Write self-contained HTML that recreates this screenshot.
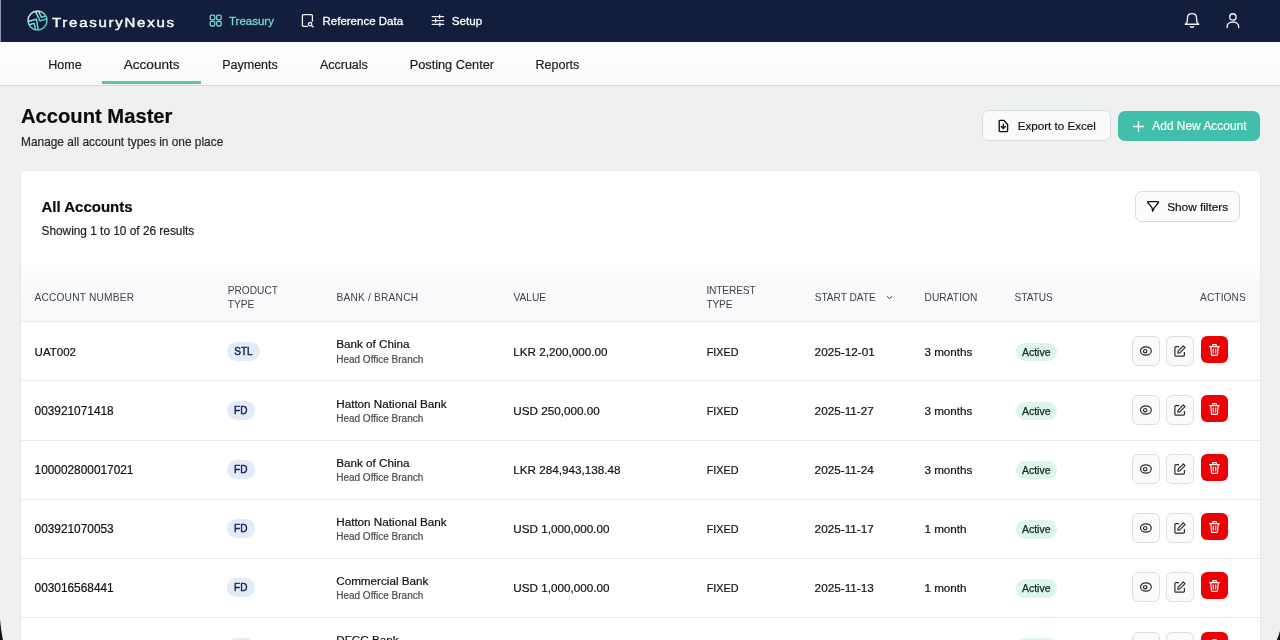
<!DOCTYPE html>
<html><head><meta charset="utf-8">
<style>
*{box-sizing:border-box;margin:0;padding:0}
html,body{width:1280px;height:640px;overflow:hidden}
body{-webkit-font-smoothing:antialiased;font-family:"Liberation Sans",sans-serif;background:#eff1f1;color:#111;position:relative}
#root{will-change:transform;position:absolute;left:0;top:0;width:1280px;height:640px;overflow:hidden}
.t{position:absolute;white-space:nowrap;line-height:normal;-webkit-text-stroke:0.2px currentColor}
.hdr{position:absolute;left:0;top:0;width:1280px;height:42px;background:#131e3c}
.hdr .strip{position:absolute;left:0;top:0;width:1px;height:42px;background:#8c93a6}
.brand{letter-spacing:1.45px;transform:scaleX(1.2);transform-origin:0 0;-webkit-text-stroke:0.45px #f4f6fa}
.tabs{position:absolute;left:0;top:42px;width:1280px;height:44px;background:linear-gradient(#fefefe,#fafafa);border-bottom:1px solid #d9d9da}
.ul{position:absolute;left:102px;top:81px;width:99px;height:3px;background:#52c9a6}
.btn{position:absolute;border-radius:7px}
.exp{left:982px;top:110px;width:129px;height:31px;background:#fafafa;border:1px solid #d9dcde}
.add{left:1118px;top:111px;width:142px;height:30px;background:#41bfab}
.flt{left:1135px;top:191px;width:105px;height:31px;background:#fcfcfc;border:1px solid #d9dcde}
.card{position:absolute;left:20px;top:170px;width:1241px;height:520px;background:#fff;border:1px solid #e5e7e7;border-radius:5px}
.thead{position:absolute;left:21px;top:262px;width:1239px;height:59px;background:linear-gradient(#fefefe 0%,#f9fafb 35%,#f8f9fa 100%)}
.sep{position:absolute;left:21px;width:1239px;height:1px;background:#e9eaeb}
.pill{position:absolute;height:19px;border-radius:10px;background:#e3ebf6;color:#15205e;font-size:10px;line-height:19px;text-align:center;-webkit-text-stroke:0.45px #15205e}
.act{position:absolute;width:41px;height:18.5px;border-radius:9.5px;background:#ddf5ea;color:#0f2a1c;font-size:10.5px;line-height:18.5px;text-align:center;-webkit-text-stroke:0.25px #0f2a1c}
.ab{position:absolute;width:28px;height:30px;border-radius:6px;display:flex;align-items:center;justify-content:center}
.eye{left:1132px;background:#fafafa;border:1px solid #dcdfe2}
.ed{left:1166px;background:#fafafa;border:1px solid #dcdfe2}
.del{left:1200.5px;width:27.5px;height:27px;background:#ea0204}

</style></head><body>
<div id="root">
<div class="hdr"><div class="strip"></div></div>
<svg style="position:absolute;left:25px;top:8px" width="25" height="25" viewBox="0 0 25 25">
<defs><linearGradient id="lg" x1="0" y1="0" x2="1" y2="1"><stop offset="0" stop-color="#eaf6f8"/><stop offset="0.4" stop-color="#7adbd3"/><stop offset="1" stop-color="#4fcfc3"/></linearGradient></defs>
<g fill="none" stroke="url(#lg)" stroke-width="1.45" stroke-linejoin="round">
<circle cx="12.5" cy="12.5" r="9.5"/>
<path d="M10.4 3.2L15 12.9L21.6 11.1"/>
<path d="M13.3 2.9L16.4 9.2L21 8"/>
<path d="M3.4 13.4L11.5 11.3L13.2 21.9"/>
<path d="M4.3 16.6L9.2 15.4L10.5 21.4"/>
</g></svg>

<div class="t brand" style="left:52.25px;top:15.9px;font-size:12.5px;color:#f4f6fa;">TreasuryNexus</div>
<svg style="position:absolute;left:209px;top:14px" width="14" height="14" viewBox="0 0 14 14"><g fill="none" stroke="#6fd8cf" stroke-width="1.3"><rect x="1.2" y="1.2" width="4.6" height="4.6" rx="1.4"/><rect x="7.6" y="1.2" width="4.6" height="4.6" rx="1.4"/><rect x="1.2" y="7.4" width="4.6" height="4.6" rx="1.4"/><rect x="7.6" y="7.4" width="4.6" height="4.6" rx="1.4"/></g></svg>
<svg style="position:absolute;left:301px;top:14px" width="14" height="14" viewBox="0 0 14 14"><g fill="none" stroke="#f0f2f6" stroke-width="1.3" stroke-linecap="round"><path d="M6.4 12.3H2.6A1.2 1.2 0 0 1 1.4 11.1V1.9A1.2 1.2 0 0 1 2.6 0.7H10.2A1.2 1.2 0 0 1 11.4 1.9V7.2"/><circle cx="9.1" cy="10.2" r="1.7"/><path d="M10.4 11.5L12.3 12.9"/></g></svg>
<svg style="position:absolute;left:431px;top:14px" width="14" height="14" viewBox="0 0 14 14"><g fill="none" stroke="#f0f2f6" stroke-width="1.25" stroke-linecap="round"><path d="M1.2 2.6H12.6M1.2 6.5H12.6M1.2 10.4H12.6"/><path d="M8.6 1V4.2M4.6 4.9V8.1M8.8 8.8V12"/></g></svg>
<svg style="position:absolute;left:1183px;top:12px" width="18" height="18" viewBox="0 0 18 18"><g fill="none" stroke="#f0f2f6" stroke-width="1.35" stroke-linejoin="round" stroke-linecap="round"><path d="M2.3 12.2C3.6 11.3 4.4 10.2 4.4 8.3V6.2C4.4 3.4 6.4 1.6 9 1.6S13.6 3.4 13.6 6.2V8.3C13.6 10.2 14.4 11.3 15.7 12.2Z"/><path d="M7.4 14.6C8 15.5 10 15.5 10.6 14.6"/></g></svg>
<svg style="position:absolute;left:1225px;top:12px" width="16" height="17" viewBox="0 0 16 17"><g fill="none" stroke="#f0f2f6" stroke-width="1.4" stroke-linecap="round"><circle cx="7.9" cy="4.9" r="3.2"/><path d="M2.1 15.6V14.8C2.1 12 4.6 10 7.9 10S13.7 12 13.7 14.8V15.6"/></g></svg>

<div class="t " style="left:229px;top:14.8px;font-size:11.5px;color:#6fd8cf;-webkit-text-stroke:0.3px #6fd8cf;">Treasury</div>
<div class="t " style="left:322.5px;top:14.8px;font-size:11.5px;color:#fafbfd;-webkit-text-stroke:0.3px #fafbfd;">Reference Data</div>
<div class="t " style="left:451.8px;top:13.8px;font-size:11.7px;color:#fafbfd;-webkit-text-stroke:0.3px #fafbfd;">Setup</div>
<div class="tabs"></div><div class="ul"></div>
<div class="t " style="left:48.3px;top:57.6px;font-size:12.5px;color:#1d1d1f;">Home</div>
<div class="t " style="left:123.7px;top:56.6px;font-size:13.6px;color:#1d1d1f;">Accounts</div>
<div class="t " style="left:222.2px;top:57.6px;font-size:12.5px;color:#1d1d1f;">Payments</div>
<div class="t " style="left:319.9px;top:57.6px;font-size:12.5px;color:#1d1d1f;">Accruals</div>
<div class="t " style="left:409.7px;top:56.6px;font-size:12.75px;color:#1d1d1f;">Posting Center</div>
<div class="t " style="left:535.5px;top:57.6px;font-size:12.5px;color:#1d1d1f;">Reports</div>
<div class="t " style="left:21px;top:104.7px;font-size:20.2px;font-weight:bold;color:#0b0c10;">Account Master</div>
<div class="t " style="left:21px;top:135px;font-size:11.9px;color:#26282c;">Manage all account types in one place</div>
<div class="btn exp"></div><div class="btn add"></div>
<div class="t " style="left:1017.8px;top:119px;font-size:11.6px;color:#111;">Export to Excel</div>
<div class="t " style="left:1152.3px;top:118.75px;font-size:11.95px;color:#f5fffc;">Add New Account</div>
<svg style="position:absolute;left:997px;top:119px" width="13" height="14" viewBox="0 0 13 14"><g fill="none" stroke="#111" stroke-width="1.35" stroke-linejoin="round" stroke-linecap="round"><path d="M3.1 1.3H6.6L10.6 5.5V11.7A0.9 0.9 0 0 1 9.7 12.6H3.1A0.9 0.9 0 0 1 2.2 11.7V2.2A0.9 0.9 0 0 1 3.1 1.3Z"/><path d="M6.3 5.2V9.4M4.3 7.6L6.3 9.6L8.3 7.6"/></g></svg>
<svg style="position:absolute;left:1132px;top:120px" width="13" height="13" viewBox="0 0 13 13"><path d="M6.5 1V12M1 6.5H12" fill="none" stroke="#f3fffb" stroke-width="1.3"/></svg>

<div class="card"></div><div class="thead"></div>
<div class="t " style="left:41.5px;top:197.8px;font-size:15px;font-weight:bold;color:#0b0c10;">All Accounts</div>
<div class="t " style="left:41.5px;top:223.7px;font-size:11.85px;color:#1d1f22;">Showing 1 to 10 of 26 results</div>
<div class="btn flt"></div>
<div class="t " style="left:1167.2px;top:199.6px;font-size:11.8px;color:#111;">Show filters</div>
<svg style="position:absolute;left:1146px;top:199px" width="15" height="14" viewBox="0 0 15 14"><path d="M2.3 2.6H11.9Q13 2.6 12.4 3.5L8.1 9.1L6.6 12.2L6 8.6L1.8 3.5Q1.2 2.6 2.3 2.6Z" fill="none" stroke="#111" stroke-width="1.3" stroke-linejoin="round"/></svg>

<div class="t " style="left:34.4px;top:291.6px;font-size:10.2px;color:#404349;letter-spacing:0.19px;-webkit-text-stroke:0;">ACCOUNT NUMBER</div>
<div class="t " style="left:227.7px;top:284.75px;font-size:10.2px;color:#404349;letter-spacing:0px;-webkit-text-stroke:0;">PRODUCT</div>
<div class="t " style="left:227.7px;top:298.8px;font-size:10.2px;color:#404349;letter-spacing:0px;-webkit-text-stroke:0;">TYPE</div>
<div class="t " style="left:336.5px;top:292px;font-size:10.2px;color:#404349;letter-spacing:0.19px;-webkit-text-stroke:0;">BANK / BRANCH</div>
<div class="t " style="left:513.6px;top:291.8px;font-size:10.2px;color:#404349;letter-spacing:-0.05px;-webkit-text-stroke:0;">VALUE</div>
<div class="t " style="left:706.4px;top:284.75px;font-size:10.2px;color:#404349;letter-spacing:-0.15px;-webkit-text-stroke:0;">INTEREST</div>
<div class="t " style="left:706.4px;top:298.8px;font-size:10.2px;color:#404349;letter-spacing:-0.15px;-webkit-text-stroke:0;">TYPE</div>
<div class="t " style="left:814.7px;top:291.8px;font-size:10.2px;color:#404349;letter-spacing:-0.04px;-webkit-text-stroke:0;">START DATE</div>
<div class="t " style="left:924.5px;top:291.8px;font-size:10.2px;color:#404349;letter-spacing:0.06px;-webkit-text-stroke:0;">DURATION</div>
<div class="t " style="left:1014.6px;top:291.8px;font-size:10.2px;color:#404349;letter-spacing:-0.08px;-webkit-text-stroke:0;">STATUS</div>
<div class="t " style="left:1200px;top:291.7px;font-size:10.2px;color:#404349;letter-spacing:0.09px;-webkit-text-stroke:0;">ACTIONS</div>
<svg style="position:absolute;left:885px;top:295px" width="9" height="6" viewBox="0 0 9 6"><path d="M2 1.3L4.5 3.6L7 1.3" fill="none" stroke="#3a3d42" stroke-width="1"/></svg>
<div class="sep" style="top:321px"></div>
<div class="t " style="left:34.6px;top:345.7px;font-size:11.5px;color:#111;">UAT002</div>
<div class="pill" style="left:227px;top:342.0px;width:33px">STL</div>
<div class="t " style="left:336.2px;top:337.4px;font-size:11.7px;color:#111;">Bank of China</div>
<div class="t " style="left:336.2px;top:354.0px;font-size:10px;color:#4a4d52;">Head Office Branch</div>
<div class="t " style="left:513.3px;top:344.8px;font-size:11.7px;color:#111;">LKR 2,200,000.00</div>
<div class="t " style="left:706.7px;top:345.8px;font-size:10.8px;color:#111;">FIXED</div>
<div class="t " style="left:814.6px;top:344.6px;font-size:11.75px;color:#111;">2025-12-01</div>
<div class="t " style="left:924.4px;top:344.6px;font-size:11.7px;color:#111;">3 months</div>
<div class="act" style="left:1015.7px;top:342.7px">Active</div>
<div class="ab eye" style="top:336.0px"><svg width="14" height="12" viewBox="0 0 14 12"><ellipse cx="6.9" cy="6" rx="5.4" ry="4.1" fill="none" stroke="#2b2d31" stroke-width="1.2"/><circle cx="6.2" cy="6.2" r="1.7" fill="none" stroke="#2b2d31" stroke-width="1.2"/></svg></div>
<div class="ab ed" style="top:336.0px"><svg width="12" height="12" viewBox="0 0 12 12"><path d="M5 1.6H1.8A0.9 0.9 0 0 0 0.9 2.5V10.2A0.9 0.9 0 0 0 1.8 11.1H9.5A0.9 0.9 0 0 0 10.4 10.2V7" fill="none" stroke="#2b2d31" stroke-width="1.2"/><path d="M9.3 0.9L11 2.6L5.8 7.8L3.8 8.2L4.2 6.2Z" fill="none" stroke="#2b2d31" stroke-width="1.2" stroke-linejoin="round"/></svg></div>
<div class="ab del" style="top:336.0px"><svg width="11" height="12" viewBox="0 0 11 12"><path d="M0.6 2.6H10.4M3.6 2.4V1.1A0.5 0.5 0 0 1 4.1 0.6H6.9A0.5 0.5 0 0 1 7.4 1.1V2.4M1.8 2.8L2.5 10.6A0.9 0.9 0 0 0 3.4 11.4H7.6A0.9 0.9 0 0 0 8.5 10.6L9.2 2.8M4.3 5V9M6.7 5V9" fill="none" stroke="#fff" stroke-width="1.15" stroke-linejoin="round" stroke-linecap="round"/></svg></div>
<div class="sep" style="top:380px"></div>
<div class="t " style="left:34.6px;top:403.8px;font-size:11.85px;color:#111;">003921071418</div>
<div class="pill" style="left:227px;top:401.1px;width:27.5px">FD</div>
<div class="t " style="left:336.2px;top:396.5px;font-size:11.7px;color:#111;">Hatton National Bank</div>
<div class="t " style="left:336.2px;top:413.1px;font-size:10px;color:#4a4d52;">Head Office Branch</div>
<div class="t " style="left:513.3px;top:403.9px;font-size:11.7px;color:#111;">USD 250,000.00</div>
<div class="t " style="left:706.7px;top:404.9px;font-size:10.8px;color:#111;">FIXED</div>
<div class="t " style="left:814.6px;top:403.7px;font-size:11.75px;color:#111;">2025-11-27</div>
<div class="t " style="left:924.4px;top:403.7px;font-size:11.7px;color:#111;">3 months</div>
<div class="act" style="left:1015.7px;top:401.8px">Active</div>
<div class="ab eye" style="top:395.1px"><svg width="14" height="12" viewBox="0 0 14 12"><ellipse cx="6.9" cy="6" rx="5.4" ry="4.1" fill="none" stroke="#2b2d31" stroke-width="1.2"/><circle cx="6.2" cy="6.2" r="1.7" fill="none" stroke="#2b2d31" stroke-width="1.2"/></svg></div>
<div class="ab ed" style="top:395.1px"><svg width="12" height="12" viewBox="0 0 12 12"><path d="M5 1.6H1.8A0.9 0.9 0 0 0 0.9 2.5V10.2A0.9 0.9 0 0 0 1.8 11.1H9.5A0.9 0.9 0 0 0 10.4 10.2V7" fill="none" stroke="#2b2d31" stroke-width="1.2"/><path d="M9.3 0.9L11 2.6L5.8 7.8L3.8 8.2L4.2 6.2Z" fill="none" stroke="#2b2d31" stroke-width="1.2" stroke-linejoin="round"/></svg></div>
<div class="ab del" style="top:395.1px"><svg width="11" height="12" viewBox="0 0 11 12"><path d="M0.6 2.6H10.4M3.6 2.4V1.1A0.5 0.5 0 0 1 4.1 0.6H6.9A0.5 0.5 0 0 1 7.4 1.1V2.4M1.8 2.8L2.5 10.6A0.9 0.9 0 0 0 3.4 11.4H7.6A0.9 0.9 0 0 0 8.5 10.6L9.2 2.8M4.3 5V9M6.7 5V9" fill="none" stroke="#fff" stroke-width="1.15" stroke-linejoin="round" stroke-linecap="round"/></svg></div>
<div class="sep" style="top:440px"></div>
<div class="t " style="left:34.6px;top:462.9px;font-size:11.85px;color:#111;">100002800017021</div>
<div class="pill" style="left:227px;top:460.2px;width:27.5px">FD</div>
<div class="t " style="left:336.2px;top:455.6px;font-size:11.7px;color:#111;">Bank of China</div>
<div class="t " style="left:336.2px;top:472.2px;font-size:10px;color:#4a4d52;">Head Office Branch</div>
<div class="t " style="left:513.3px;top:463.0px;font-size:11.7px;color:#111;">LKR 284,943,138.48</div>
<div class="t " style="left:706.7px;top:464.0px;font-size:10.8px;color:#111;">FIXED</div>
<div class="t " style="left:814.6px;top:462.8px;font-size:11.75px;color:#111;">2025-11-24</div>
<div class="t " style="left:924.4px;top:462.8px;font-size:11.7px;color:#111;">3 months</div>
<div class="act" style="left:1015.7px;top:460.9px">Active</div>
<div class="ab eye" style="top:454.2px"><svg width="14" height="12" viewBox="0 0 14 12"><ellipse cx="6.9" cy="6" rx="5.4" ry="4.1" fill="none" stroke="#2b2d31" stroke-width="1.2"/><circle cx="6.2" cy="6.2" r="1.7" fill="none" stroke="#2b2d31" stroke-width="1.2"/></svg></div>
<div class="ab ed" style="top:454.2px"><svg width="12" height="12" viewBox="0 0 12 12"><path d="M5 1.6H1.8A0.9 0.9 0 0 0 0.9 2.5V10.2A0.9 0.9 0 0 0 1.8 11.1H9.5A0.9 0.9 0 0 0 10.4 10.2V7" fill="none" stroke="#2b2d31" stroke-width="1.2"/><path d="M9.3 0.9L11 2.6L5.8 7.8L3.8 8.2L4.2 6.2Z" fill="none" stroke="#2b2d31" stroke-width="1.2" stroke-linejoin="round"/></svg></div>
<div class="ab del" style="top:454.2px"><svg width="11" height="12" viewBox="0 0 11 12"><path d="M0.6 2.6H10.4M3.6 2.4V1.1A0.5 0.5 0 0 1 4.1 0.6H6.9A0.5 0.5 0 0 1 7.4 1.1V2.4M1.8 2.8L2.5 10.6A0.9 0.9 0 0 0 3.4 11.4H7.6A0.9 0.9 0 0 0 8.5 10.6L9.2 2.8M4.3 5V9M6.7 5V9" fill="none" stroke="#fff" stroke-width="1.15" stroke-linejoin="round" stroke-linecap="round"/></svg></div>
<div class="sep" style="top:499px"></div>
<div class="t " style="left:34.6px;top:522.0px;font-size:11.85px;color:#111;">003921070053</div>
<div class="pill" style="left:227px;top:519.3px;width:27.5px">FD</div>
<div class="t " style="left:336.2px;top:514.7px;font-size:11.7px;color:#111;">Hatton National Bank</div>
<div class="t " style="left:336.2px;top:531.3px;font-size:10px;color:#4a4d52;">Head Office Branch</div>
<div class="t " style="left:513.3px;top:522.1px;font-size:11.7px;color:#111;">USD 1,000,000.00</div>
<div class="t " style="left:706.7px;top:523.1px;font-size:10.8px;color:#111;">FIXED</div>
<div class="t " style="left:814.6px;top:521.9px;font-size:11.75px;color:#111;">2025-11-17</div>
<div class="t " style="left:924.4px;top:521.9px;font-size:11.7px;color:#111;">1 month</div>
<div class="act" style="left:1015.7px;top:520.0px">Active</div>
<div class="ab eye" style="top:513.3px"><svg width="14" height="12" viewBox="0 0 14 12"><ellipse cx="6.9" cy="6" rx="5.4" ry="4.1" fill="none" stroke="#2b2d31" stroke-width="1.2"/><circle cx="6.2" cy="6.2" r="1.7" fill="none" stroke="#2b2d31" stroke-width="1.2"/></svg></div>
<div class="ab ed" style="top:513.3px"><svg width="12" height="12" viewBox="0 0 12 12"><path d="M5 1.6H1.8A0.9 0.9 0 0 0 0.9 2.5V10.2A0.9 0.9 0 0 0 1.8 11.1H9.5A0.9 0.9 0 0 0 10.4 10.2V7" fill="none" stroke="#2b2d31" stroke-width="1.2"/><path d="M9.3 0.9L11 2.6L5.8 7.8L3.8 8.2L4.2 6.2Z" fill="none" stroke="#2b2d31" stroke-width="1.2" stroke-linejoin="round"/></svg></div>
<div class="ab del" style="top:513.3px"><svg width="11" height="12" viewBox="0 0 11 12"><path d="M0.6 2.6H10.4M3.6 2.4V1.1A0.5 0.5 0 0 1 4.1 0.6H6.9A0.5 0.5 0 0 1 7.4 1.1V2.4M1.8 2.8L2.5 10.6A0.9 0.9 0 0 0 3.4 11.4H7.6A0.9 0.9 0 0 0 8.5 10.6L9.2 2.8M4.3 5V9M6.7 5V9" fill="none" stroke="#fff" stroke-width="1.15" stroke-linejoin="round" stroke-linecap="round"/></svg></div>
<div class="sep" style="top:558px"></div>
<div class="t " style="left:34.6px;top:581.1px;font-size:11.85px;color:#111;">003016568441</div>
<div class="pill" style="left:227px;top:578.4px;width:27.5px">FD</div>
<div class="t " style="left:336.2px;top:573.8px;font-size:11.7px;color:#111;">Commercial Bank</div>
<div class="t " style="left:336.2px;top:590.4px;font-size:10px;color:#4a4d52;">Head Office Branch</div>
<div class="t " style="left:513.3px;top:581.2px;font-size:11.7px;color:#111;">USD 1,000,000.00</div>
<div class="t " style="left:706.7px;top:582.2px;font-size:10.8px;color:#111;">FIXED</div>
<div class="t " style="left:814.6px;top:581.0px;font-size:11.75px;color:#111;">2025-11-13</div>
<div class="t " style="left:924.4px;top:581.0px;font-size:11.7px;color:#111;">1 month</div>
<div class="act" style="left:1015.7px;top:579.1px">Active</div>
<div class="ab eye" style="top:572.4px"><svg width="14" height="12" viewBox="0 0 14 12"><ellipse cx="6.9" cy="6" rx="5.4" ry="4.1" fill="none" stroke="#2b2d31" stroke-width="1.2"/><circle cx="6.2" cy="6.2" r="1.7" fill="none" stroke="#2b2d31" stroke-width="1.2"/></svg></div>
<div class="ab ed" style="top:572.4px"><svg width="12" height="12" viewBox="0 0 12 12"><path d="M5 1.6H1.8A0.9 0.9 0 0 0 0.9 2.5V10.2A0.9 0.9 0 0 0 1.8 11.1H9.5A0.9 0.9 0 0 0 10.4 10.2V7" fill="none" stroke="#2b2d31" stroke-width="1.2"/><path d="M9.3 0.9L11 2.6L5.8 7.8L3.8 8.2L4.2 6.2Z" fill="none" stroke="#2b2d31" stroke-width="1.2" stroke-linejoin="round"/></svg></div>
<div class="ab del" style="top:572.4px"><svg width="11" height="12" viewBox="0 0 11 12"><path d="M0.6 2.6H10.4M3.6 2.4V1.1A0.5 0.5 0 0 1 4.1 0.6H6.9A0.5 0.5 0 0 1 7.4 1.1V2.4M1.8 2.8L2.5 10.6A0.9 0.9 0 0 0 3.4 11.4H7.6A0.9 0.9 0 0 0 8.5 10.6L9.2 2.8M4.3 5V9M6.7 5V9" fill="none" stroke="#fff" stroke-width="1.15" stroke-linejoin="round" stroke-linecap="round"/></svg></div>
<div class="sep" style="top:617px"></div>
<div class="t " style="left:34.6px;top:640.2px;font-size:11.85px;color:#111;">000000000000</div>
<div class="pill" style="left:227px;top:637.5px;width:27.5px">FD</div>
<div class="t " style="left:336.2px;top:632.9px;font-size:11.7px;color:#111;">DFCC Bank</div>
<div class="t " style="left:336.2px;top:649.5px;font-size:10px;color:#4a4d52;">Head Office Branch</div>
<div class="t " style="left:513.3px;top:640.3px;font-size:11.7px;color:#111;">USD 1,000,000.00</div>
<div class="t " style="left:706.7px;top:641.3px;font-size:10.8px;color:#111;">FIXED</div>
<div class="t " style="left:814.6px;top:640.1px;font-size:11.75px;color:#111;">2025-11-10</div>
<div class="t " style="left:924.4px;top:640.1px;font-size:11.7px;color:#111;">1 month</div>
<div class="act" style="left:1015.7px;top:638.2px">Active</div>
<div class="ab eye" style="top:631.5px"><svg width="14" height="12" viewBox="0 0 14 12"><ellipse cx="6.9" cy="6" rx="5.4" ry="4.1" fill="none" stroke="#2b2d31" stroke-width="1.2"/><circle cx="6.2" cy="6.2" r="1.7" fill="none" stroke="#2b2d31" stroke-width="1.2"/></svg></div>
<div class="ab ed" style="top:631.5px"><svg width="12" height="12" viewBox="0 0 12 12"><path d="M5 1.6H1.8A0.9 0.9 0 0 0 0.9 2.5V10.2A0.9 0.9 0 0 0 1.8 11.1H9.5A0.9 0.9 0 0 0 10.4 10.2V7" fill="none" stroke="#2b2d31" stroke-width="1.2"/><path d="M9.3 0.9L11 2.6L5.8 7.8L3.8 8.2L4.2 6.2Z" fill="none" stroke="#2b2d31" stroke-width="1.2" stroke-linejoin="round"/></svg></div>
<div class="ab del" style="top:631.5px"><svg width="11" height="12" viewBox="0 0 11 12"><path d="M0.6 2.6H10.4M3.6 2.4V1.1A0.5 0.5 0 0 1 4.1 0.6H6.9A0.5 0.5 0 0 1 7.4 1.1V2.4M1.8 2.8L2.5 10.6A0.9 0.9 0 0 0 3.4 11.4H7.6A0.9 0.9 0 0 0 8.5 10.6L9.2 2.8M4.3 5V9M6.7 5V9" fill="none" stroke="#fff" stroke-width="1.15" stroke-linejoin="round" stroke-linecap="round"/></svg></div>
<svg style="position:absolute;left:0;top:600px" width="1280" height="40" viewBox="0 600 1280 40"><path d="M0 619Q1.2 632 3 640H0Z" fill="#111"/><path d="M1280 631Q1278.6 636.5 1276.8 640H1280Z" fill="#111"/></svg>

</div>
</body></html>
